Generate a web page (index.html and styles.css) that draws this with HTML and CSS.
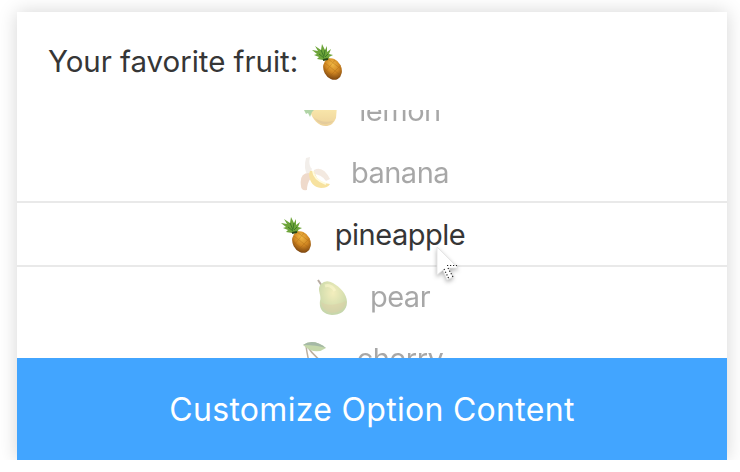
FILE: index.html
```html
<!DOCTYPE html>
<html lang="en">
<head>
<meta charset="utf-8">
<title>Customize Option Content</title>
<link rel="stylesheet" href="styles.css">
</head>
<body>
<svg class="defs" width="0" height="0">
  <defs>
    <radialGradient id="gold" cx=".62" cy=".3" r=".8"><stop offset="0" stop-color="#f2b944"/><stop offset=".5" stop-color="#cf8521"/><stop offset="1" stop-color="#6b380c"/></radialGradient>
    <linearGradient id="yellow" x1="0" y1="0" x2="0" y2="1"><stop offset="0" stop-color="#ffdf52"/><stop offset="1" stop-color="#d89a18"/></linearGradient>
    <radialGradient id="green" cx=".5" cy=".35" r=".7"><stop offset="0" stop-color="#e5d867"/><stop offset=".55" stop-color="#a7b94b"/><stop offset="1" stop-color="#719b3b"/></radialGradient>
    <symbol id="pineapple" viewBox="0 0 36 40">
      <path d="M13 18 7 17l2-2-5-2 3-1-5-4 6 1-3-5 6 4 1-6 3 6 2-4v6l4-3-2 5 4 1-4 2 1 3z" fill="#6da43a"/>
      <path d="m14 16-5-4m5 3-3-7m3 6 1-6m0 7 3-3" stroke="#3f7a28" fill="none"/>
      <ellipse cx="22.5" cy="27" rx="8.8" ry="11.2" transform="rotate(-28 22.5 27)" fill="url(#gold)"/>
      <path d="m15 21 14 11M18 17l13 10M14 26l12 11M25 18 15 30m16-7L19 35" stroke="#a2610f" stroke-width=".8" opacity=".4"/>
      <path d="m13 18 5-1" stroke="#284717" stroke-width="2"/>
    </symbol>
    <symbol id="lemon" viewBox="0 0 36 40">
      <path d="M7 20C13 8 30 5 34 15l-1 12q-1 3-4 6C20 39 10 31 7 20z" fill="url(#yellow)"/>
      <path d="M1 19q6-7 11-1l-3 3-2 5-2-4-2 1z" fill="#4b9d32"/>
      <path d="M9 25q9 8 22 5-8 6-16 1z" fill="#9b6518" opacity=".4"/>
    </symbol>
    <symbol id="banana" viewBox="0 0 36 40">
      <path d="m11 5 4-1q-2 8 2 12l-4 7q-5-7-2-18z" fill="#e3d8cf"/>
      <path d="M14 20Q4 20 6 33q0 5 6 4 0-7 4-12z" fill="#dcab88"/>
      <path d="M19 17q9-5 16 9l-4 2q-5-7-13-7z" fill="#e5cdb8"/>
      <path d="M15 18q4-1 5 3 3 9 15 10-2 4-9 4-11-1-12-14z" fill="#edbe23"/>
      <path d="M18 18q1 9 13 13" fill="none" stroke="#fff6b3" stroke-width="2"/>
    </symbol>
    <symbol id="pear" viewBox="0 0 36 40">
      <path d="M8 9 4 3" stroke="#5b412a" stroke-width="2"/>
      <path d="M7 7q5-5 12-1c7 4 14 11 14 19 0 9-7 13-15 13C8 37 5 31 6 24 8 17 2 13 7 7z" fill="url(#green)"/>
      <path d="M7 25q8 6 25-1-1 11-14 12Q8 34 7 25z" fill="#b7862e" opacity=".4"/>
      <path d="M11 9q6-2 10 5" stroke="#fff391" stroke-width="3" opacity=".55" fill="none"/>
    </symbol>
    <symbol id="cherry" viewBox="0 0 36 40">
      <path d="M5 7q2 14 5 22M6 7q8 12 20 19" fill="none" stroke="#644822" stroke-width="1.5"/>
      <path d="M2 6q10-7 23 3-11 8-23-3z" fill="#78a53c"/>
      <path d="M2 6q10-7 23 3-9-3-23-3z" fill="#315e34"/>
      <circle cx="26" cy="27" r="7.5" fill="#d92a31"/><circle cx="11" cy="34" r="7" fill="#d92a31"/>
    </symbol>
  </defs>
</svg>
<main class="stage">
  <section class="card">
    <header class="summary"><span class="label">Your favorite fruit:</span><svg class="fruit"><use href="#pineapple"/></svg></header>
    <div class="picker">
      <div class="option lemon"><svg class="fruit"><use href="#lemon"/></svg><span>lemon</span></div>
      <div class="option banana"><svg class="fruit"><use href="#banana"/></svg><span>banana</span></div>
      <div class="option selected"><svg class="fruit"><use href="#pineapple"/></svg><span>pineapple</span></div>
      <div class="option pear"><svg class="fruit"><use href="#pear"/></svg><span>pear</span></div>
      <div class="option cherry"><svg class="fruit"><use href="#cherry"/></svg><span>cherry</span></div>
    </div>
    <footer class="caption">Customize Option Content</footer>
  </section>
  <svg class="cursor" viewBox="0 0 28 40">
    <path d="M3 2v28l6-5 4 10 6-3-4-9h9z" fill="#fff" stroke="#e2e2e2" stroke-width=".8"/>
    <path d="M13 20.5h10M10 24l5 10M14 23l5 9" fill="none" stroke="#222" stroke-width="1.2" stroke-dasharray="1.2 1.8"/>
  </svg>
</main>
</body>
</html>
```

FILE: styles.css
```css
body {
  margin: 0;
  background: #fff;
  color: #363636;
  font-family: Inter, "Liberation Sans", sans-serif;
}
.defs { position: absolute; }
.stage {
  position: relative;
  box-sizing: border-box;
  width: 740px;
  height: 460px;
  padding: 12px 13px 0 17px;
  overflow: hidden;
}
.card {
  height: 448px;
  background: #fff;
  box-shadow: 0 0 18px rgba(0, 0, 0, .17);
}
.summary {
  display: flex;
  align-items: center;
  box-sizing: border-box;
  height: 98px;
  padding: 0 0 0 31px;
  font-size: 29.5px;
}
.label { letter-spacing: -.04px; white-space: nowrap; }
.fruit { flex: none; width: 36px; height: 40px; }
.summary .fruit { margin: 2px 0 0 12px; }
.picker {
  position: relative;
  display: flex;
  flex-direction: column;
  justify-content: center;
  height: 248px;
  overflow: hidden;
}
.picker::after {
  content: "";
  position: absolute;
  inset: 91px 0;
  border: solid #e9e9e9;
  border-width: 2px 0;
}
.option {
  display: flex;
  flex: none;
  align-items: center;
  justify-content: center;
  gap: 20px;
  height: 62px;
  font-size: 29px;
  letter-spacing: -.5px;
}
.option:not(.selected) { opacity: .43; }
.option .fruit { margin-top: 2px; }
.caption {
  display: flex;
  align-items: center;
  justify-content: center;
  height: 102px;
  background: #42a5ff;
  color: #fff;
  font-size: 32px;
  letter-spacing: .3px;
}
.cursor {
  position: absolute;
  left: 434px;
  top: 245px;
  width: 28px;
  height: 40px;
  filter: drop-shadow(0 2px 2px rgba(0, 0, 0, .3));
}
```
